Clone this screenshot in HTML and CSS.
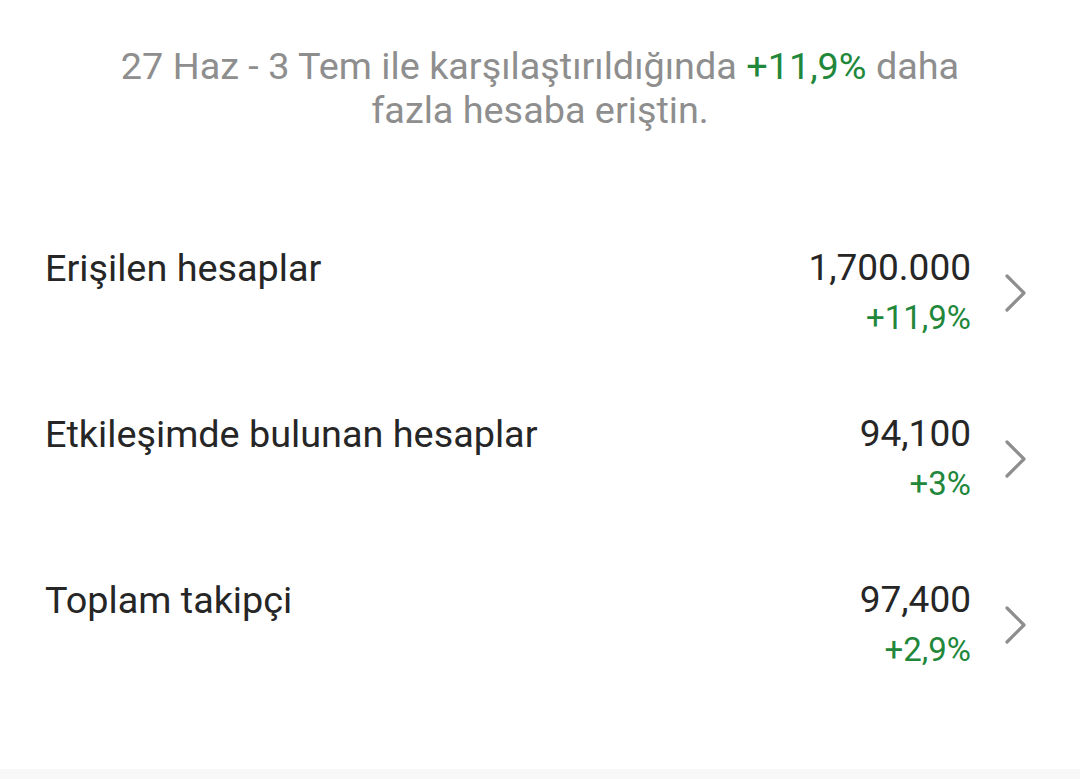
FILE: index.html
```html
<!DOCTYPE html>
<html lang="tr">
<head>
<meta charset="utf-8">
<link rel="stylesheet" href="styles.css">
</head>
<body>
<div class="page">
  <p class="summary">27 Haz - 3 Tem ile karşılaştırıldığında <span class="up">+11,9%</span> daha fazla hesaba eriştin.</p>
  <div class="rows">
    <div class="row">
      <div class="label">Erişilen hesaplar</div>
      <div class="nums">
        <div class="value">1,700.000</div>
        <div class="change">+11,9%</div>
      </div>
      <svg class="chev" width="24" height="40" viewBox="0 0 24 40"><polyline points="3,3 20,20 3,37" fill="none" stroke="#8e8e8e" stroke-width="3.2" stroke-linecap="round" stroke-linejoin="round"/></svg>
    </div>
    <div class="row">
      <div class="label">Etkileşimde bulunan hesaplar</div>
      <div class="nums">
        <div class="value">94,100</div>
        <div class="change">+3%</div>
      </div>
      <svg class="chev" width="24" height="40" viewBox="0 0 24 40"><polyline points="3,3 20,20 3,37" fill="none" stroke="#8e8e8e" stroke-width="3.2" stroke-linecap="round" stroke-linejoin="round"/></svg>
    </div>
    <div class="row">
      <div class="label">Toplam takipçi</div>
      <div class="nums">
        <div class="value">97,400</div>
        <div class="change">+2,9%</div>
      </div>
      <svg class="chev" width="24" height="40" viewBox="0 0 24 40"><polyline points="3,3 20,20 3,37" fill="none" stroke="#8e8e8e" stroke-width="3.2" stroke-linecap="round" stroke-linejoin="round"/></svg>
    </div>
  </div>
  <div class="footer"></div>
</div>
</body>
</html>
```

FILE: styles.css
```css
html, body {
  margin: 0;
  padding: 0;
  background: #ffffff;
}
body {
  font-family: Roboto, "Noto Sans", sans-serif;
}
.page {
  display: flex;
  flex-direction: column;
  min-height: 100vh;
}
.summary {
  margin: 0;
  padding: 44px 100px 0;
  text-align: center;
  font-size: 37.8px;
  line-height: 44px;
  color: #8e8e8e;
}
.up {
  color: #21873a;
}
.rows {
  display: flex;
  flex-direction: column;
  gap: 66px;
  padding: 111px 52px 0 45px;
}
.row {
  display: flex;
  align-items: center;
}
.label {
  flex: 1;
  align-self: flex-start;
  font-size: 37.8px;
  line-height: 50px;
  color: #262626;
}
.nums {
  display: flex;
  flex-direction: column;
  align-items: flex-end;
}
.value {
  font-size: 37px;
  line-height: 50px;
  color: #262626;
}
.change {
  font-size: 33px;
  line-height: 50px;
  color: #21873a;
}
.chev {
  margin-left: 33px;
  display: block;
}
.footer {
  margin-top: auto;
  height: 10px;
  background: #f8f8f8;
}
```
